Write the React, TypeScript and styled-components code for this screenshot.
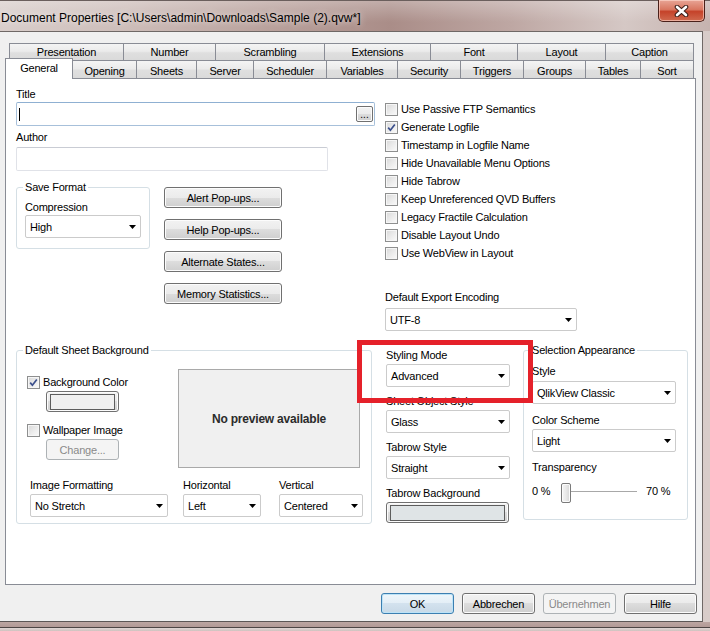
import React from "react";
import styled, { createGlobalStyle } from "styled-components";

const GlobalStyle = createGlobalStyle`
  html, body {
    margin: 0;
    padding: 0;
    background: #ffffff;
  }
  body {
    font-family: "Liberation Sans", Arial, sans-serif;
    font-size: 11px;
    letter-spacing: -0.2px;
    color: #000;
  }
  * {
    box-sizing: border-box;
  }
`;

// window chrome

const Window = styled.div`
  width: 710px;
  height: 631px;
  display: flex;
  flex-direction: column;
  overflow: hidden;
  background: linear-gradient(90deg, #c9b7b3, #d8ccc9);
`;

const TitleBar = styled.div`
  height: 31px;
  flex: none;
  display: flex;
  align-items: flex-start;
  border-top: 1px solid #6b5f5d;
  background: linear-gradient(180deg, rgba(255, 255, 255, 0.28), rgba(255, 255, 255, 0) 70%),
    linear-gradient(90deg, #d9cecb 0%, #cdbdb9 18%, #b9a19c 38%, #aa8d88 55%, #bea7a3 72%, #d5c8c5 88%, #c6b3af 100%);
`;

const TitleText = styled.div`
  flex: 1;
  padding: 9px 0 0 1px;
  font-size: 12px;
  letter-spacing: 0;
  line-height: 16px;
  white-space: nowrap;
  color: #000;
  text-shadow: 0 0 6px rgba(255, 255, 255, 0.9);
`;

const CloseButton = styled.div`
  width: 47px;
  height: 22px;
  margin: -1px 5px 0 0;
  border: 1px solid #4a2019;
  border-top: none;
  border-radius: 0 0 5px 5px;
  display: flex;
  align-items: center;
  justify-content: center;
  background: linear-gradient(180deg, #e8a596 0%, #d97761 45%, #c5432a 55%, #d06a4f 100%);
  box-shadow: inset 0 0 0 1px rgba(255, 220, 210, 0.6);
`;

const Body = styled.div`
  flex: 1;
  display: flex;
`;

const Client = styled.div`
  width: 703px;
  display: flex;
  flex-direction: column;
  background: #f0f0f0;
  border-top: 1px solid #6f6866;
  border-right: 1px solid #6f6866;
  border-bottom: 1px solid #5c5655;
  padding-top: 11px;
`;

const BottomFrame = styled.div`
  height: 9px;
  flex: none;
  background: linear-gradient(180deg, #bca6a2 0, #b29995 5px, #4d4544 5px, #4d4544 6px, #e0d6d4 6px, #cfc2bf 100%);
`;

// tabs

const TabRow = styled.div<{ $indent: number }>`
  display: flex;
  padding-left: ${(p) => p.$indent}px;
`;

const Tab = styled.div<{ $w: number; $front?: boolean; $active?: boolean }>`
  width: ${(p) => p.$w}px;
  height: ${(p) => (p.$active ? 21 : p.$front ? 18 : 17)}px;
  margin-top: ${(p) => (p.$active ? -2 : 0)}px;
  margin-right: -1px;
  margin-bottom: ${(p) => (p.$active ? -1 : 0)}px;
  padding-top: ${(p) => (p.$active ? 2 : p.$front ? 3 : 1)}px;
  border: 1px solid #898c95;
  border-bottom: none;
  position: relative;
  z-index: ${(p) => (p.$active ? 2 : 0)};
  text-align: center;
  line-height: 14px;
  white-space: nowrap;
  background: ${(p) =>
    p.$active ? "#ffffff" : "linear-gradient(180deg, #f4f4f4 0%, #ebebeb 45%, #dfdfdf 55%, #dadada 100%)"};
`;

const Panel = styled.div`
  position: relative;
  margin-left: 5px;
  width: 691px;
  height: 507px;
  border: 1px solid #898c95;
  background: #ffffff;
`;

// generic form parts

const Label = styled.div<{ $mt?: number; $mb?: number }>`
  line-height: 14px;
  height: 14px;
  white-space: nowrap;
  margin-top: ${(p) => p.$mt ?? 0}px;
  margin-bottom: ${(p) => p.$mb ?? 2}px;
`;

const TextBox = styled.div<{ $w: number; $focus?: boolean }>`
  width: ${(p) => p.$w}px;
  height: 24px;
  display: flex;
  align-items: center;
  padding: 0 1px 0 2px;
  background: #fff;
  border: 1px solid ${(p) => (p.$focus ? "#a7c0da" : "#e0e2e8")};
  border-top-color: ${(p) => (p.$focus ? "#8fb0d2" : "#c9ccd4")};
  border-radius: 2px;
`;

const Caret = styled.span`
  width: 1px;
  height: 13px;
  background: #000;
`;

const EllipsisButton = styled.div`
  margin-left: auto;
  width: 17px;
  height: 16px;
  border: 1px solid #707070;
  border-radius: 2px;
  background: linear-gradient(180deg, #f2f2f2 0%, #ebebeb 50%, #dddddd 50%, #cfcfcf 100%);
  box-shadow: inset 0 0 0 1px #fcfcfc;
  font-size: 10px;
  line-height: 16px;
  text-align: center;
  letter-spacing: 0;
`;

const Combo = styled.div<{ $w: number }>`
  width: ${(p) => p.$w}px;
  height: 23px;
  display: flex;
  align-items: center;
  justify-content: space-between;
  padding: 0 4px 0 4px;
  background: #fff;
  border: 1px solid #cbcbcb;
  border-radius: 2px;
  white-space: nowrap;
`;

const PushButton = styled.button<{ $w: number; $h?: number; $kind?: "default" | "disabled" }>`
  width: ${(p) => p.$w}px;
  height: ${(p) => p.$h ?? 21}px;
  padding: 0;
  font: inherit;
  letter-spacing: inherit;
  color: ${(p) => (p.$kind === "disabled" ? "#8a8a8a" : "#000")};
  border: 1px solid ${(p) => (p.$kind === "default" ? "#3c7fb1" : p.$kind === "disabled" ? "#adb2b5" : "#707070")};
  border-radius: 3px;
  background: ${(p) =>
    p.$kind === "disabled"
      ? "#f4f4f4"
      : p.$kind === "default"
      ? "linear-gradient(180deg, #eef6fb 0%, #e3eef6 50%, #d3e2ee 50%, #c8d9e7 100%)"
      : "linear-gradient(180deg, #f2f2f2 0%, #ebebeb 50%, #dddddd 50%, #cfcfcf 100%)"};
  box-shadow: inset 0 0 0 1px ${(p) => (p.$kind === "default" ? "#bde3f7" : p.$kind === "disabled" ? "#f4f4f4" : "#fcfcfc")};
  display: flex;
  align-items: center;
  justify-content: center;
`;

const ColorSwatch = styled.span<{ $fill: string }>`
  width: calc(100% - 6px);
  height: 16px;
  border: 1px solid #5d5d5d;
  background: ${(p) => p.$fill};
`;

const CheckRow = styled.div<{ $mt?: number }>`
  height: 18px;
  margin-top: ${(p) => p.$mt ?? 0}px;
  display: flex;
  align-items: center;
  gap: 3px;
  white-space: nowrap;
`;

const CheckBox = styled.span`
  width: 13px;
  height: 13px;
  flex: none;
  border: 1px solid #8e8f8f;
  background: linear-gradient(135deg, #d8d8d8 0%, #eeeeee 60%, #fafafa 100%);
  box-shadow: inset 0 0 0 1px #f6f6f6;
  display: flex;
  align-items: center;
  justify-content: center;
`;

const Group = styled.fieldset<{ $w: number; $pt: number; $pb: number; $mt?: number }>`
  width: ${(p) => p.$w}px;
  margin: ${(p) => p.$mt ?? 0}px 0 0 0;
  min-inline-size: 0;
  padding: ${(p) => p.$pt}px 8px ${(p) => p.$pb}px 8px;
  border: 1px solid #d5dfe5;
  border-radius: 3px;
`;

const GroupTitle = styled.legend`
  padding: 0 2px;
  margin-left: -2px;
  line-height: 14px;
  height: 14px;
  white-space: nowrap;
`;

// layout sections

const TopSection = styled.div`
  display: flex;
  padding-left: 10px;
`;

const LeftColumn = styled.div`
  width: 359px;
  padding-top: 8px;
  display: flex;
  flex-direction: column;
`;

const RightColumn = styled.div`
  margin-left: 10px;
  padding-top: 21px;
  display: flex;
  flex-direction: column;
`;

const SaveRow = styled.div`
  display: flex;
  align-items: flex-start;
`;

const ButtonStack = styled.div`
  margin: 16px 0 0 14px;
  display: flex;
  flex-direction: column;
  gap: 11px;
`;

const BottomSection = styled.div`
  display: flex;
  align-items: flex-start;
  padding-left: 10px;
  margin-top: 12px;
`;

const SheetTop = styled.div`
  display: flex;
  align-items: flex-start;
`;

const SheetLeft = styled.div`
  width: 153px;
  padding: 4px 0 0 2px;
  display: flex;
  flex-direction: column;
`;

const Indented = styled.div<{ $mt: number }>`
  margin: ${(p) => p.$mt}px 0 0 19px;
`;

const Preview = styled.div`
  width: 182px;
  height: 99px;
  border: 1px solid #a9a9a9;
  background: #f0f0f0;
  display: flex;
  align-items: center;
  justify-content: center;
  font-weight: bold;
  font-size: 12px;
  letter-spacing: -0.2px;
  color: #2b2b2b;
`;

const SheetBottom = styled.div`
  display: flex;
  padding-left: 5px;
  margin-top: 10px;
`;

const Field = styled.div<{ $ml?: number }>`
  display: flex;
  flex-direction: column;
  margin-left: ${(p) => p.$ml ?? 0}px;
`;

const MiddleColumn = styled.div`
  width: 124px;
  margin: 5px 0 0 14px;
  display: flex;
  flex-direction: column;
`;

const SelectionGroupWrap = styled.div`
  margin-left: 13px;
`;

const SliderRow = styled.div`
  display: flex;
  align-items: center;
  height: 24px;
  margin-top: 5px;
`;

const SliderValue = styled.span<{ $w?: number }>`
  width: ${(p) => (p.$w ? `${p.$w}px` : "auto")};
  white-space: nowrap;
`;

const SliderTrack = styled.div`
  width: 76px;
  height: 24px;
  margin-right: 9px;
  padding-top: 4px;
  background: linear-gradient(
    180deg,
    transparent 12px,
    #a8a8a8 12px,
    #a8a8a8 13px,
    #ffffff 13px,
    #ffffff 14px,
    transparent 14px
  );
`;

const SliderThumb = styled.div`
  width: 10px;
  height: 20px;
  border: 1px solid #7a7a7a;
  border-radius: 2px;
  background: linear-gradient(90deg, #f6f6f6 0%, #e9e9e9 50%, #d6d6d6 100%);
  box-shadow: inset 0 0 0 1px #fbfbfb;
`;

const Annotation = styled.div`
  position: absolute;
  left: 351px;
  top: 261px;
  width: 176px;
  height: 63px;
  border: 5px solid #e5212a;
  pointer-events: none;
`;

const ButtonBar = styled.div`
  display: flex;
  justify-content: flex-end;
  gap: 8px;
  margin-top: 8px;
  padding-right: 5px;
`;

// small drawings

const DropArrow = () => (
  <svg width="7" height="4" viewBox="0 0 7 4">
    <path d="M0 0h7L3.5 4z" fill="#000" />
  </svg>
);

const Tick = () => (
  <svg width="9" height="9" viewBox="0 0 9 9">
    <path d="M1.2 4.6 L3.4 7.2 L7.8 1.4" stroke="#3b4f8c" strokeWidth="1.7" fill="none" />
  </svg>
);

const CloseGlyph = () => (
  <svg width="15" height="12" viewBox="0 0 15 12">
    <path d="M3 2 L12 10 M12 2 L3 10" stroke="#3a1d18" strokeWidth="4.6" strokeLinecap="round" />
    <path d="M3 2 L12 10 M12 2 L3 10" stroke="#ffffff" strokeWidth="2.6" strokeLinecap="round" />
  </svg>
);

const Check = ({ label, checked, mt }: { label: string; checked?: boolean; mt?: number }) => (
  <CheckRow $mt={mt}>
    <CheckBox>{checked && <Tick />}</CheckBox>
    <span>{label}</span>
  </CheckRow>
);

const Select = ({ w, value }: { w: number; value: string }) => (
  <Combo $w={w}>
    <span>{value}</span>
    <DropArrow />
  </Combo>
);

const backTabs = [
  { label: "Presentation", w: 115 },
  { label: "Number", w: 93 },
  { label: "Scrambling", w: 110 },
  { label: "Extensions", w: 107 },
  { label: "Font", w: 88 },
  { label: "Layout", w: 89 },
  { label: "Caption", w: 89 },
];

const frontTabs = [
  { label: "General", w: 68 },
  { label: "Opening", w: 65 },
  { label: "Sheets", w: 61 },
  { label: "Server", w: 58 },
  { label: "Scheduler", w: 74 },
  { label: "Variables", w: 72 },
  { label: "Security", w: 64 },
  { label: "Triggers", w: 64 },
  { label: "Groups", w: 63 },
  { label: "Tables", w: 56 },
  { label: "Sort", w: 54 },
];

const options = [
  { label: "Use Passive FTP Semantics" },
  { label: "Generate Logfile", checked: true },
  { label: "Timestamp in Logfile Name" },
  { label: "Hide Unavailable Menu Options" },
  { label: "Hide Tabrow" },
  { label: "Keep Unreferenced QVD Buffers" },
  { label: "Legacy Fractile Calculation" },
  { label: "Disable Layout Undo" },
  { label: "Use WebView in Layout" },
];

const App = () => {
  return (
    <>
      <GlobalStyle />
      <Window>
        <TitleBar>
          <TitleText>Document Properties [C:\Users\admin\Downloads\Sample (2).qvw*]</TitleText>
          <CloseButton>
            <CloseGlyph />
          </CloseButton>
        </TitleBar>
        <Body>
          <Client>
            <TabRow $indent={9}>
              {backTabs.map((t) => (
                <Tab key={t.label} $w={t.w}>
                  {t.label}
                </Tab>
              ))}
            </TabRow>
            <TabRow $indent={5}>
              {frontTabs.map((t, i) => (
                <Tab key={t.label} $w={t.w} $front $active={i === 0}>
                  {t.label}
                </Tab>
              ))}
            </TabRow>
            <Panel>
              <TopSection>
                <LeftColumn>
                  <Label $mb={1}>Title</Label>
                  <TextBox $w={359} $focus>
                    <Caret />
                    <EllipsisButton>...</EllipsisButton>
                  </TextBox>
                  <Label $mt={4} $mb={3}>
                    Author
                  </Label>
                  <TextBox $w={312} />
                  <SaveRow>
                    <Group $w={134} $pt={6} $pb={10} $mt={9}>
                      <GroupTitle>Save Format</GroupTitle>
                      <Label $mb={1}>Compression</Label>
                      <Select w={116} value="High" />
                    </Group>
                    <ButtonStack>
                      <PushButton $w={118}>Alert Pop-ups...</PushButton>
                      <PushButton $w={118}>Help Pop-ups...</PushButton>
                      <PushButton $w={118}>Alternate States...</PushButton>
                      <PushButton $w={118}>Memory Statistics...</PushButton>
                    </ButtonStack>
                  </SaveRow>
                </LeftColumn>
                <RightColumn>
                  {options.map((o) => (
                    <Check key={o.label} label={o.label} checked={o.checked} />
                  ))}
                  <Label $mt={28} $mb={4}>
                    Default Export Encoding
                  </Label>
                  <Select w={192} value="UTF-8" />
                </RightColumn>
              </TopSection>

              <BottomSection>
                <Group $w={356} $pt={12} $pb={6}>
                  <GroupTitle>Default Sheet Background</GroupTitle>
                  <SheetTop>
                    <SheetLeft>
                      <Check label="Background Color" checked />
                      <Indented $mt={0}>
                        <PushButton $w={73}>
                          <ColorSwatch $fill="#f0f0f0" />
                        </PushButton>
                      </Indented>
                      <Check label="Wallpaper Image" mt={9} />
                      <Indented $mt={0}>
                        <PushButton $w={73} $kind="disabled">
                          Change...
                        </PushButton>
                      </Indented>
                    </SheetLeft>
                    <Preview>No preview available</Preview>
                  </SheetTop>
                  <SheetBottom>
                    <Field>
                      <Label>Image Formatting</Label>
                      <Select w={138} value="No Stretch" />
                    </Field>
                    <Field $ml={15}>
                      <Label>Horizontal</Label>
                      <Select w={78} value="Left" />
                    </Field>
                    <Field $ml={18}>
                      <Label>Vertical</Label>
                      <Select w={84} value="Centered" />
                    </Field>
                  </SheetBottom>
                </Group>

                <MiddleColumn>
                  <Label>Styling Mode</Label>
                  <Select w={124} value="Advanced" />
                  <Label $mt={7}>Sheet Object Style</Label>
                  <Select w={124} value="Glass" />
                  <Label $mt={7}>Tabrow Style</Label>
                  <Select w={124} value="Straight" />
                  <Label $mt={7}>Tabrow Background</Label>
                  <PushButton $w={123}>
                    <ColorSwatch $fill="#dfe4e6" />
                  </PushButton>
                </MiddleColumn>

                <SelectionGroupWrap>
                  <Group $w={165} $pt={7} $pb={16}>
                    <GroupTitle>Selection Appearance</GroupTitle>
                    <Label $mb={3}>Style</Label>
                    <Select w={144} value="QlikView Classic" />
                    <Label $mt={9}>Color Scheme</Label>
                    <Select w={144} value="Light" />
                    <Label $mt={8} $mb={0}>
                      Transparency
                    </Label>
                    <SliderRow>
                      <SliderValue $w={29}>0 %</SliderValue>
                      <SliderTrack>
                        <SliderThumb />
                      </SliderTrack>
                      <SliderValue>70 %</SliderValue>
                    </SliderRow>
                  </Group>
                </SelectionGroupWrap>
              </BottomSection>

              <Annotation />
            </Panel>
            <ButtonBar>
              <PushButton $w={73} $kind="default">
                OK
              </PushButton>
              <PushButton $w={73}>Abbrechen</PushButton>
              <PushButton $w={73} $kind="disabled">
                Übernehmen
              </PushButton>
              <PushButton $w={73}>Hilfe</PushButton>
            </ButtonBar>
          </Client>
        </Body>
        <BottomFrame />
      </Window>
    </>
  );
};

export default App;
